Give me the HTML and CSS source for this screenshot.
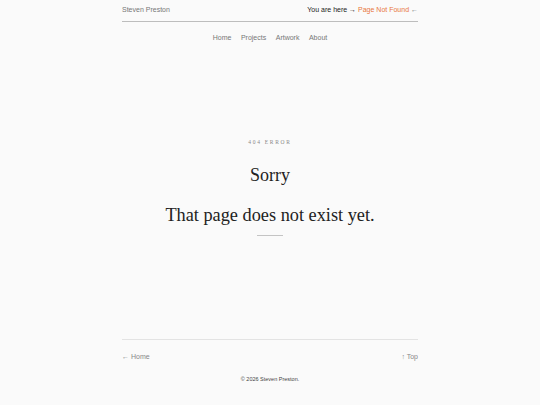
FILE: index.html
```html
<!DOCTYPE html>
<html lang="en">
<head>
<meta charset="utf-8">
<title>404 - Steven Preston</title>
<link rel="stylesheet" href="styles.css">
</head>
<body>
<div class="wrap">
  <header class="top">
    <a class="brand" href="#">Steven Preston</a>
    <div class="crumb">You are here &rarr; <span class="here">Page Not Found</span> <span class="back">&larr;</span></div>
  </header>
  <nav class="menu">
    <a href="#">Home</a>
    <a href="#">Projects</a>
    <a href="#">Artwork</a>
    <a href="#">About</a>
  </nav>
  <main class="content">
    <p class="kicker">404 ERROR</p>
    <h1 class="title">Sorry</h1>
    <h2 class="subtitle">That page does not exist yet.</h2>
    <hr class="rule">
  </main>
  <footer class="foot">
    <div class="foot-links">
      <a href="#">&larr; Home</a>
      <a href="#">&uarr; Top</a>
    </div>
    <p class="copy">&copy; 2026 Steven Preston.</p>
  </footer>
</div>
</body>
</html>
```
FILE: styles.css
```css
html, body {
  margin: 0;
  padding: 0;
  background: #fafafa;
}
body {
  font-family: "Liberation Sans", Arial, sans-serif;
  color: #222;
}
a {
  text-decoration: none;
  color: inherit;
}
.wrap {
  width: 296px;
  margin: 0 auto;
}
.top {
  display: flex;
  justify-content: space-between;
  align-items: center;
  font-size: 7px;
  line-height: 10px;
  padding: 5px 0 6px;
  border-bottom: 1px solid #bdbdbd;
}
.brand {
  color: #777;
}
.crumb {
  color: #222;
}
.here {
  color: #e8773f;
}
.back {
  color: #777;
}
.menu {
  display: flex;
  justify-content: center;
  gap: 9.5px;
  margin-top: 11px;
  font-size: 7px;
  line-height: 10px;
  color: #777;
}
.content {
  padding-top: 95px;
  text-align: center;
}
.kicker {
  margin: 0;
  font-family: "Liberation Serif", "Times New Roman", serif;
  font-size: 5.5px;
  line-height: 8px;
  letter-spacing: 1.7px;
  color: #888;
}
.title {
  margin: 18px 0 0;
  font-family: "Liberation Serif", "Times New Roman", serif;
  font-weight: normal;
  font-size: 18px;
  line-height: 22px;
  color: #222;
}
.subtitle {
  margin: 18px 0 0;
  font-family: "Liberation Serif", "Times New Roman", serif;
  font-weight: normal;
  font-size: 18.3px;
  line-height: 22px;
  color: #222;
}
.rule {
  width: 26px;
  height: 0;
  margin: 9px auto 0;
  border: 0;
  border-top: 1px solid #c4c4c4;
}
.foot {
  margin-top: 103px;
  border-top: 1px solid #e3e3e3;
}
.foot-links {
  display: flex;
  justify-content: space-between;
  padding-top: 12px;
  font-size: 7px;
  line-height: 10px;
  color: #888;
}
.copy {
  margin: 12px 0 0;
  text-align: center;
  font-size: 5.5px;
  line-height: 10px;
  color: #444;
}
```
